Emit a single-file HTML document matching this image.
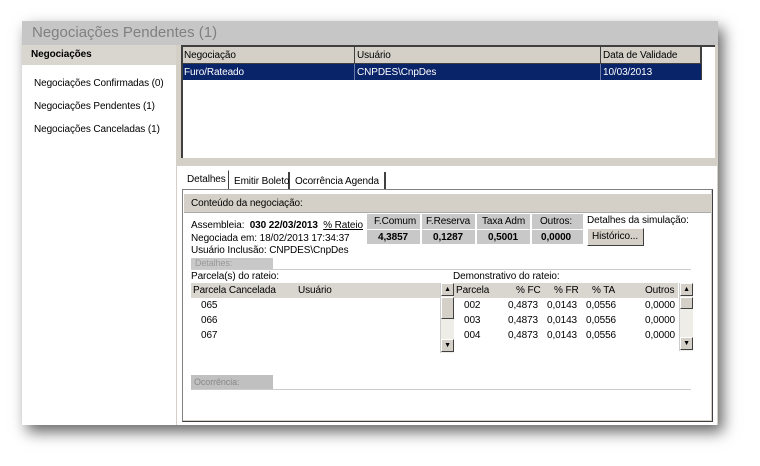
<!DOCTYPE html>
<html><head><meta charset="utf-8"><style>
*{margin:0;padding:0;box-sizing:border-box}
body{width:760px;height:466px;background:#fff;position:relative;overflow:hidden;font-family:"Liberation Sans",Arial,sans-serif;font-size:10px;letter-spacing:-0.1px;color:#000}
.a{position:absolute}
.t{position:absolute;white-space:nowrap}
.sb{position:absolute;background:#eeede8;border-left:1px solid #ccc}
.arr{position:absolute;left:0;width:13px;height:13px;background:#d4d0c8;border:1px solid;border-color:#fff #404040 #404040 #fff;font-size:7px;line-height:11px;text-align:center}
</style></head><body>
<div class="a" style="left:22px;top:21px;width:696px;height:404px;box-shadow:5px 7px 14px rgba(0,0,0,.6);background:#d4d0c8"></div>
<div class="a" style="left:22px;top:21px;width:696px;height:24px;background:#c6c6c6"></div>
<div class="t" style="left:32px;top:24px;font-size:15px;letter-spacing:0;color:#808080">Negociações Pendentes (1)</div>
<div class="a" style="left:22px;top:45px;width:154px;height:380px;background:#fff"></div>
<div class="a" style="left:22px;top:45px;width:154px;height:20px;background:#d9d6d0"></div>
<div class="t" style="left:31px;top:49px;font-weight:bold">Negociações</div>
<div class="t" style="left:34px;top:78px">Negociações Confirmadas (0)</div>
<div class="t" style="left:34px;top:101px">Negociações Pendentes (1)</div>
<div class="t" style="left:34px;top:124px">Negociações Canceladas (1)</div>
<div class="a" style="left:181px;top:45px;width:534px;height:113px;background:#fff;border-left:2px solid #404040;border-top:2px solid #404040"></div>
<div class="a" style="left:183px;top:47px;width:518px;height:17px;background:#d4d0c8;border-bottom:1px solid #404040"></div>
<div class="a" style="left:354px;top:47px;width:1px;height:33px;background:#404040"></div>
<div class="a" style="left:600px;top:47px;width:1px;height:33px;background:#404040"></div>
<div class="a" style="left:700px;top:47px;width:2px;height:33px;background:#404040"></div>
<div class="t" style="left:184px;top:50px">Negociação</div>
<div class="t" style="left:357px;top:50px">Usuário</div>
<div class="t" style="left:603px;top:50px">Data de Validade</div>
<div class="a" style="left:183px;top:64px;width:518px;height:16px;background:#0a246a"></div>
<div class="a" style="left:354px;top:64px;width:1px;height:16px;background:#6a7aa8"></div>
<div class="a" style="left:600px;top:64px;width:1px;height:16px;background:#6a7aa8"></div>
<div class="t" style="left:184px;top:67px;color:#fff">Furo/Rateado</div>
<div class="t" style="left:357px;top:67px;color:#fff">CNPDES\CnpDes</div>
<div class="t" style="left:603px;top:67px;color:#fff">10/03/2013</div>
<div class="a" style="left:177px;top:166px;width:540px;height:259px;background:#fff"></div>
<div class="a" style="left:182px;top:170px;width:47px;height:20px;background:#fff;border:1px solid;border-color:#fff #404040 transparent #fff"></div>
<div class="t" style="left:187px;top:174px">Detalhes</div>
<div class="a" style="left:230px;top:172px;width:60px;height:17px;border-right:2px solid #404040"></div>
<div class="t" style="left:234px;top:176px">Emitir Boleto</div>
<div class="a" style="left:291px;top:172px;width:95px;height:17px;border-right:2px solid #404040"></div>
<div class="t" style="left:295px;top:176px">Ocorrência Agenda</div>
<div class="a" style="left:182px;top:189px;width:531px;height:233px;background:#fff;border:1px solid;border-color:#808080 #404040 #404040 #808080;box-shadow:inset -1px -1px #d4d0c8"></div>
<div class="a" style="left:184px;top:194px;width:527px;height:19px;background:#d4d0c8;border-bottom:1px solid #aaa"></div>
<div class="t" style="left:191px;top:198px">Conteúdo da negociação:</div>
<div class="t" style="left:191px;top:220px">Assembleia: <b>&nbsp;030 22/03/2013</b> &nbsp;<u>% Rateio</u></div>
<div class="t" style="left:191px;top:233px">Negociada em: 18/02/2013 17:34:37</div>
<div class="t" style="left:191px;top:245px">Usuário Inclusão: CNPDES\CnpDes</div>
<div class="a" style="left:367px;top:214px;width:216px;height:30px;background:#fff"></div>
<div class="a" style="left:367px;top:214px;width:53px;height:30px;background:#c8c8c8"></div>
<div class="a" style="left:422px;top:214px;width:53px;height:30px;background:#c8c8c8"></div>
<div class="a" style="left:477px;top:214px;width:53px;height:30px;background:#c8c8c8"></div>
<div class="a" style="left:532px;top:214px;width:51px;height:30px;background:#c8c8c8"></div>
<div class="a" style="left:367px;top:229px;width:216px;height:1px;background:#fff"></div>
<div class="t" style="left:374px;top:216px">F.Comum</div>
<div class="t" style="left:426px;top:216px">F.Reserva</div>
<div class="t" style="left:482px;top:216px">Taxa Adm</div>
<div class="t" style="left:540px;top:216px">Outros:</div>
<div class="t" style="left:378px;top:232px;font-weight:bold">4,3857</div>
<div class="t" style="left:433px;top:232px;font-weight:bold">0,1287</div>
<div class="t" style="left:488px;top:232px;font-weight:bold">0,5001</div>
<div class="t" style="left:541px;top:232px;font-weight:bold">0,0000</div>
<div class="t" style="left:587px;top:215px">Detalhes da simulação:</div>
<div class="a" style="left:587px;top:228px;width:57px;height:18px;background:#d4d0c8;border:1px solid;border-color:#fff #404040 #404040 #fff"></div>
<div class="t" style="left:592px;top:231px">Histórico...</div>
<div class="a" style="left:191px;top:258px;width:82px;height:12px;background:#c8c8c8"></div>
<div class="t" style="left:195px;top:258px;color:#999;font-size:9px">Detalhes:</div>
<div class="a" style="left:191px;top:269px;width:500px;height:1px;background:#ccc"></div>
<div class="t" style="left:191px;top:271px">Parcela(s) do rateio:</div>
<div class="t" style="left:453px;top:271px">Demonstrativo do rateio:</div>
<div class="a" style="left:191px;top:283px;width:249px;height:15px;background:#d9d6d0"></div>
<div class="t" style="left:193px;top:285px">Parcela Cancelada</div>
<div class="t" style="left:298px;top:285px">Usuário</div>
<div class="t" style="left:201px;top:300px">065</div>
<div class="t" style="left:201px;top:315px">066</div>
<div class="t" style="left:201px;top:330px">067</div>
<div class="sb" style="left:440px;top:283px;width:14px;height:70px"><div class="arr" style="top:0">▲</div><div class="a" style="left:0;top:14px;width:13px;height:22px;background:#d4d0c8;border:1px solid;border-color:#fff #404040 #404040 #fff"></div><div class="arr" style="top:56px">▼</div></div>
<div class="a" style="left:454px;top:283px;width:224px;height:15px;background:#d9d6d0"></div>
<div class="t" style="left:456px;top:285px">Parcela</div>
<div class="t" style="left:516px;top:285px">% FC</div>
<div class="t" style="left:554px;top:285px">% FR</div>
<div class="t" style="left:592px;top:285px">% TA</div>
<div class="t" style="left:645px;top:285px">Outros</div>
<div class="t" style="left:464px;top:300px">002</div><div class="t" style="left:508px;top:300px">0,4873</div><div class="t" style="left:547px;top:300px">0,0143</div><div class="t" style="left:586px;top:300px">0,0556</div><div class="t" style="left:645px;top:300px">0,0000</div>
<div class="t" style="left:464px;top:315px">003</div><div class="t" style="left:508px;top:315px">0,4873</div><div class="t" style="left:547px;top:315px">0,0143</div><div class="t" style="left:586px;top:315px">0,0556</div><div class="t" style="left:645px;top:315px">0,0000</div>
<div class="t" style="left:464px;top:330px">004</div><div class="t" style="left:508px;top:330px">0,4873</div><div class="t" style="left:547px;top:330px">0,0143</div><div class="t" style="left:586px;top:330px">0,0556</div><div class="t" style="left:645px;top:330px">0,0000</div>
<div class="sb" style="left:679px;top:283px;width:14px;height:68px"><div class="arr" style="top:0">▲</div><div class="a" style="left:0;top:14px;width:13px;height:12px;background:#d4d0c8;border:1px solid;border-color:#fff #404040 #404040 #fff"></div><div class="arr" style="top:54px">▼</div></div>
<div class="a" style="left:191px;top:375px;width:82px;height:14px;background:#c0c0c0"></div>
<div class="t" style="left:194px;top:377px;color:#888;font-size:9px">Ocorrência:</div>
<div class="a" style="left:191px;top:389px;width:500px;height:1px;background:#ccc"></div>
</body></html>
